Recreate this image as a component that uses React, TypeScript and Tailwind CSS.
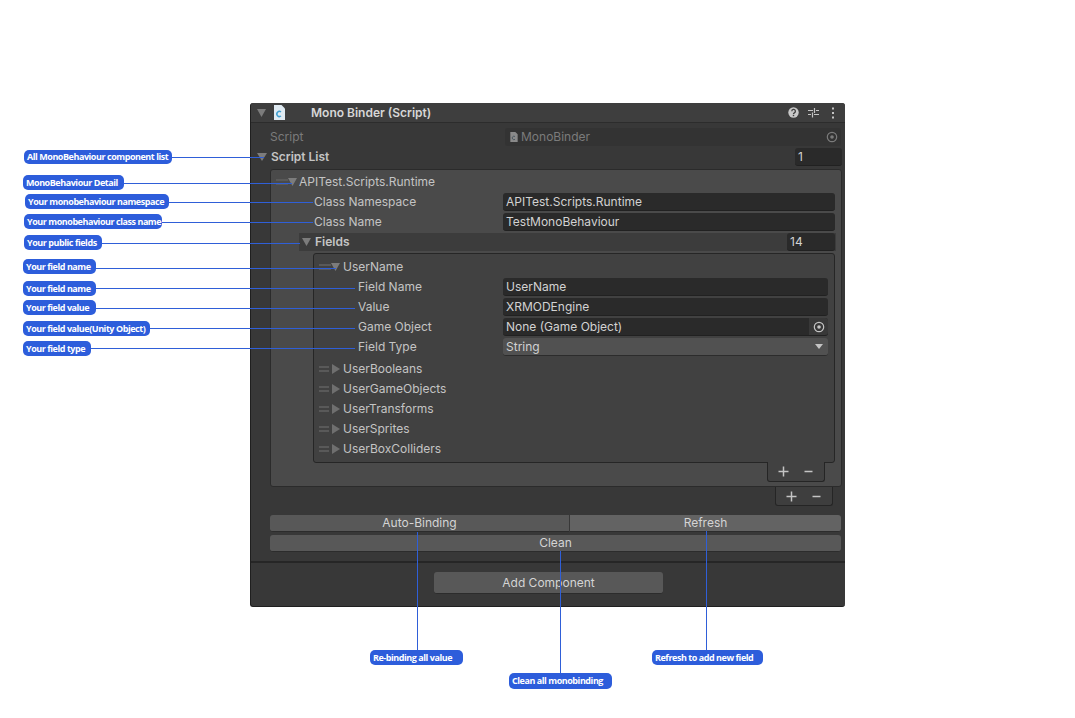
import React from "react";

// callout pills over the inspector, left column and below the panel
const pills = [
  { text: "All MonoBehaviour component list", box: "left-[24px] top-[150px] w-[148px] h-[14px]" },
  { text: "MonoBehaviour Detail", box: "left-[23px] top-[175px] w-[101px] h-[15px]" },
  { text: "Your monobehaviour namespace", box: "left-[25px] top-[194px] w-[144px] h-[15px]" },
  { text: "Your monobehaviour class name", box: "left-[24px] top-[214px] w-[138px] h-[15px]" },
  { text: "Your public fields", box: "left-[24px] top-[235px] w-[78px] h-[15px]" },
  { text: "Your field name", box: "left-[23px] top-[259px] w-[73px] h-[15px]" },
  { text: "Your field name", box: "left-[23px] top-[281px] w-[73px] h-[15px]" },
  { text: "Your field value", box: "left-[23px] top-[300px] w-[73px] h-[15px]" },
  { text: "Your field value(Unity Object)", box: "left-[23px] top-[321px] w-[127px] h-[15px]" },
  { text: "Your field type", box: "left-[23px] top-[341px] w-[68px] h-[15px]" },
  { text: "Re-binding all value", box: "left-[370px] top-[650px] w-[93px] h-[15px]" },
  { text: "Clean all monobinding", box: "left-[509px] top-[673px] w-[103px] h-[16px]" },
  { text: "Refresh to add new field", box: "left-[652px] top-[650px] w-[111px] h-[15px]" },
];

const lines = [
  "left-[172px] top-[157px] w-[92px] h-px",
  "left-[124px] top-[183px] w-[168px] h-px",
  "left-[169px] top-[202px] w-[144px] h-px",
  "left-[162px] top-[222px] w-[151px] h-px",
  "left-[102px] top-[243px] w-[198px] h-px",
  "left-[96px] top-[268px] w-[240px] h-px",
  "left-[96px] top-[288px] w-[259px] h-px",
  "left-[96px] top-[308px] w-[259px] h-px",
  "left-[150px] top-[328px] w-[205px] h-px",
  "left-[91px] top-[348px] w-[264px] h-px",
  "left-[417px] top-[532px] w-px h-[118px]",
  "left-[560px] top-[551px] w-px h-[122px]",
  "left-[706px] top-[531px] w-px h-[119px]",
];

const TriangleDown = ({ className }: { className: string }) => (
  <svg viewBox="0 0 10 9" preserveAspectRatio="none" className={className}>
    <path d="M0 0h10L5 9z" fill="#7c7c7c" />
  </svg>
);

const TriangleRight = () => (
  <svg viewBox="0 0 8 10" className="w-[8px] h-[10px] shrink-0">
    <path d="M0 0l8 5-8 5z" fill="#6f6f6f" />
  </svg>
);

const Handle = ({ className }: { className: string }) => (
  <div className={`shrink-0 flex flex-col gap-[2px] ${className}`}>
    <div className="h-[2px] bg-[#595959]" />
    <div className="h-[2px] bg-[#595959]" />
  </div>
);

const ScriptIcon = ({ className, muted }: { className: string; muted?: boolean }) => (
  <svg viewBox="0 0 11 15" className={className}>
    <path d="M0 0h7.5L11 3.5V15H0z" fill={muted ? "#8a8a8a" : "#dfeaf2"} />
    <path d="M7 6.8a2.6 2.6 0 1 0 0 4.2" fill="none" stroke={muted ? "#4d5a62" : "#3f9fd0"} strokeWidth="1.5" />
  </svg>
);

const TargetIcon = ({ color }: { color: string }) => (
  <svg viewBox="0 0 12 12" className="w-[12px] h-[12px]">
    <circle cx="6" cy="6" r="4.7" fill="none" stroke={color} strokeWidth="1.2" />
    <circle cx="6" cy="6" r="1.8" fill={color} />
  </svg>
);

const TextInput = ({ value, className }: { value: string; className: string }) => (
  <div className={`h-[18px] rounded-[3px] bg-[#2a2a2a] border-b border-[#212121] pl-[3px] flex items-center text-[#d2d2d2] ${className}`}>
    {value}
  </div>
);

const PlusMinus = ({ className }: { className: string }) => (
  <div className={`w-[58px] rounded-b-[3px] border border-t-0 border-[#252525] pr-[2px] flex items-center justify-center gap-[15px] ${className}`}>
    <svg viewBox="0 0 11 11" className="w-[11px] h-[11px]">
      <path d="M5.5 0.5v10M0.5 5.5h10" stroke="#c4c4c4" strokeWidth="1.5" />
    </svg>
    <svg viewBox="0 0 9 11" className="w-[9px] h-[11px]">
      <path d="M0.5 5.5h8" stroke="#c4c4c4" strokeWidth="1.5" />
    </svg>
  </div>
);

const CollapsedRow = ({ name }: { name: string }) => (
  <div className="h-[20px] flex items-center pl-[5px]">
    <Handle className="w-[10px]" />
    <div className="ml-[3px]"><TriangleRight /></div>
    <span className="ml-[3px]">{name}</span>
  </div>
);

export default function App() {
  return (
    <div className="relative w-[1075px] h-[718px] bg-white overflow-hidden pl-[250px] pt-[103px] font-['Inter',sans-serif] text-[12px] text-[#c4c4c4]">
      <div className="w-[595px] h-[504px] rounded-[3px] bg-[#383838] border-l border-b border-[#1f1f1f] flex flex-col">
        {/* component header */}
        <div className="h-[20px] shrink-0 rounded-t-[3px] bg-[#3e3e3e] border-b border-[#2c2c2c] flex items-center">
          <TriangleDown className="ml-[6px] w-[9px] h-[8px]" />
          <ScriptIcon className="ml-[8px] w-[11px] h-[15px]" />
          <span className="ml-[26px] font-semibold text-[#d6d6d6]">Mono Binder (Script)</span>
          <div className="ml-auto flex items-center gap-[9px] pr-[10px]">
            <svg viewBox="0 0 11 11" className="w-[11px] h-[11px]">
              <circle cx="5.5" cy="5.5" r="5.2" fill="#c8c8c8" />
              <path d="M3.8 4.2a1.8 1.8 0 1 1 2.6 1.6c-.6.3-.9.6-.9 1.2" fill="none" stroke="#3e3e3e" strokeWidth="1.3" />
              <rect x="4.8" y="7.8" width="1.4" height="1.4" fill="#3e3e3e" />
            </svg>
            <svg viewBox="0 0 11 11" className="w-[11px] h-[11px]">
              <path d="M0 3.5h5M8 3.5h3M0 7.5h3M6 7.5h5" stroke="#c4c4c4" strokeWidth="1.2" />
              <path d="M6.5 1v5M4.5 5.5v5" stroke="#c4c4c4" strokeWidth="1.2" />
            </svg>
            <svg viewBox="0 0 4 12" className="ml-[3px] w-[4px] h-[12px]">
              <rect x="1" y="0.5" width="2" height="2" fill="#c4c4c4" />
              <rect x="1" y="5" width="2" height="2" fill="#c4c4c4" />
              <rect x="1" y="9.5" width="2" height="2" fill="#c4c4c4" />
            </svg>
          </div>
        </div>

        {/* script row */}
        <div className="h-[20px] mt-[4px] shrink-0 flex items-center pl-[19px] pr-[4px] text-[#7b7b7b]">
          <span>Script</span>
          <div className="ml-auto w-[336px] h-[18px] rounded-[3px] bg-[#333333] flex items-center pl-[5px] pr-[3px]">
            <ScriptIcon muted className="w-[8px] h-[10px]" />
            <span className="ml-[3px]">MonoBinder</span>
            <div className="ml-auto"><TargetIcon color="#7b7b7b" /></div>
          </div>
        </div>

        {/* script list header */}
        <div className="h-[20px] shrink-0 flex items-center pl-[6px] pr-[3px]">
          <TriangleDown className="w-[10px] h-[8px]" />
          <span className="ml-[4px] font-semibold">Script List</span>
          <TextInput value="1" className="ml-auto w-[47px]" />
        </div>

        {/* list element */}
        <div className="mt-[2px] ml-[19px] mr-[3px] h-[318px] shrink-0 rounded-[3px] bg-[#4a4a4a] border border-[#2b2b2b] flex flex-col">
          <div className="h-[20px] mt-[2px] shrink-0 flex items-center pl-[5px]">
            <Handle className="w-[12px]" />
            <TriangleDown className="w-[9px] h-[8px]" />
            <span className="ml-[2px]">APITest.Scripts.Runtime</span>
          </div>
          <div className="h-[20px] shrink-0 flex items-center pl-[43px] pr-[6px]">
            <span>Class Namespace</span>
            <TextInput value="APITest.Scripts.Runtime" className="ml-auto w-[332px]" />
          </div>
          <div className="h-[20px] shrink-0 flex items-center pl-[43px] pr-[6px]">
            <span>Class Name</span>
            <TextInput value="TestMonoBehaviour" className="ml-auto w-[332px]" />
          </div>

          {/* fields header */}
          <div className="ml-[28px] mr-[5px] mt-[1px] h-[18px] shrink-0 bg-[#3c3c3c] flex items-center pl-[3px] pr-[1px]">
            <TriangleDown className="w-[9px] h-[8px]" />
            <span className="ml-[4px] font-semibold">Fields</span>
            <TextInput value="14" className="ml-auto w-[48px]" />
          </div>

          {/* fields element */}
          <div className="ml-[42px] mr-[6px] mt-[2px] h-[210px] shrink-0 rounded-[3px] bg-[#414141] border border-[#262626] flex flex-col pt-[3px]">
            <div className="h-[20px] shrink-0 flex items-center pl-[5px]">
              <Handle className="w-[12px]" />
              <TriangleDown className="w-[9px] h-[8px]" />
              <span className="ml-[3px]">UserName</span>
            </div>
            <div className="h-[20px] shrink-0 flex items-center pl-[44px] pr-[6px]">
              <span>Field Name</span>
              <TextInput value="UserName" className="ml-auto w-[325px]" />
            </div>
            <div className="h-[20px] shrink-0 flex items-center pl-[44px] pr-[6px]">
              <span>Value</span>
              <TextInput value="XRMODEngine" className="ml-auto w-[325px]" />
            </div>
            <div className="h-[20px] shrink-0 flex items-center pl-[44px] pr-[6px]">
              <span>Game Object</span>
              <div className="ml-auto w-[325px] h-[18px] rounded-[3px] bg-[#2a2a2a] border-b border-[#212121] pl-[3px] flex items-center text-[#d2d2d2]">
                None (Game Object)
                <div className="ml-auto w-[19px] h-full rounded-r-[3px] bg-[#383838] flex items-center justify-center">
                  <TargetIcon color="#c4c4c4" />
                </div>
              </div>
            </div>
            <div className="h-[20px] shrink-0 flex items-center pl-[44px] pr-[6px]">
              <span>Field Type</span>
              <div className="ml-auto w-[325px] h-[18px] rounded-[3px] bg-[#515151] border-b border-[#2c2c2c] pl-[3px] pr-[5px] flex items-center text-[#d2d2d2]">
                String
                <svg viewBox="0 0 8 5" className="ml-auto w-[8px] h-[5px]">
                  <path d="M0 0h8L4 5z" fill="#c4c4c4" />
                </svg>
              </div>
            </div>
            <div className="h-[2px] shrink-0" />
            <CollapsedRow name="UserBooleans" />
            <CollapsedRow name="UserGameObjects" />
            <CollapsedRow name="UserTransforms" />
            <CollapsedRow name="UserSprites" />
            <CollapsedRow name="UserBoxColliders" />
          </div>
          <PlusMinus className="self-end mr-[16px] -mt-px h-[20px] bg-[#414141]" />
        </div>
        <PlusMinus className="self-end mr-[12px] h-[19px] bg-[#3e3e3e]" />

        {/* bottom buttons */}
        <div className="mt-[9px] ml-[19px] mr-[4px] h-[17px] shrink-0 flex gap-px">
          <div className="w-[299px] rounded-l-[3px] bg-[#585858] border-b border-[#2c2c2c] flex items-center justify-center text-[#d4d4d4]">Auto-Binding</div>
          <div className="flex-1 rounded-r-[3px] bg-[#636363] border-b border-[#2c2c2c] flex items-center justify-center text-[#d4d4d4]">Refresh</div>
        </div>
        <div className="mt-[3px] ml-[19px] mr-[4px] h-[17px] shrink-0 rounded-[3px] bg-[#585858] border-b border-[#2c2c2c] flex items-center justify-center text-[#d4d4d4]">Clean</div>

        <div className="mt-[9px] h-[2px] shrink-0 bg-[#262626]" />
        <div className="mt-[9px] ml-[183px] w-[229px] h-[22px] shrink-0 rounded-[3px] bg-[#585858] border-b border-[#2c2c2c] flex items-center justify-center text-[#d4d4d4]">Add Component</div>
      </div>

      {/* callout lines and pills lie over the panel */}
      {lines.map((box) => (
        <div key={box} className={`absolute bg-[#2f5fd8] ${box}`} />
      ))}
      {pills.map((pill) => (
        <div
          key={pill.box}
          className={`absolute rounded-[5px] bg-[#2d5ddb] flex items-center pl-[3px] whitespace-nowrap font-['Open_Sans',sans-serif] font-bold text-[9px] tracking-[-0.45px] text-white ${pill.box}`}
        >
          {pill.text}
        </div>
      ))}
    </div>
  );
}
